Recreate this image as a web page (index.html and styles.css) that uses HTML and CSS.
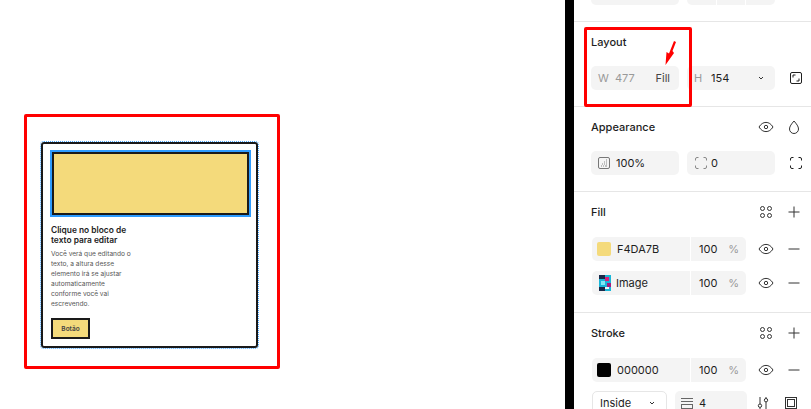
FILE: index.html
```html
<!DOCTYPE html>
<html lang="en">
<head>
  <meta charset="UTF-8" />
  <title>Layout Fill</title>
  <link rel="stylesheet" href="styles.css">
</head>
<body>
  <svg class="sprite" width="0" height="0">
    <symbol id="eye" viewBox="0 0 16 16"><path d="M1 8c2-3.2 4.400-4.600 7-4.600s5 1.400 7 4.600c-2 3.200-4.400 4.600-7 4.600S3 11.200 1 8z" fill="none" stroke="currentColor" stroke-width="1"/><circle cx="8" cy="8" r="1.700" fill="none" stroke="currentColor" stroke-width="1"/></symbol>
    <symbol id="styles" viewBox="0 0 16 16"><g fill="none" stroke="currentColor" stroke-width="1"><circle cx="4.500" cy="4.500" r="2"/><circle cx="11.500" cy="4.500" r="2"/><circle cx="4.500" cy="11.500" r="2"/><circle cx="11.500" cy="11.500" r="2"/></g></symbol>
    <symbol id="plus" viewBox="0 0 16 16"><path d="M8 2.500v11M2.500 8h11" stroke="currentColor" stroke-width="1"/></symbol>
    <symbol id="minus" viewBox="0 0 16 16"><path d="M2.500 8h11" stroke="currentColor" stroke-width="1"/></symbol>
    <symbol id="corners" viewBox="0 0 14 14"><path d="M1.500 4.500V3a1.500 1.500 0 0 1 1.500-1.500h1.500M9.500 1.500H11A1.500 1.500 0 0 1 12.500 3v1.500M12.500 9.500V11a1.500 1.500 0 0 1-1.500 1.500H9.500M4.500 12.500H3A1.500 1.500 0 0 1 1.500 11V9.500" fill="none" stroke="currentColor" stroke-width="1"/></symbol>
  </svg>

  <div class="main-wrapper">
    <main class="canvas">
      <div class="red-box">
        <div class="card">
          <div class="card-image"></div>
          <h2 class="card-title">Clique no bloco de<br>texto para editar</h2>
          <p class="card-text">Você verá que editando o<br>texto, a altura desse<br>elemento irá se ajustar<br>automaticamente<br>conforme você vai<br>escrevendo.</p>
          <div class="card-btn">Botão</div>
        </div>
      </div>
    </main>

    <div class="divider-bar"></div>

    <aside class="panel">
      <section class="section section-top">
        <div class="row">
          <div class="field field-half"></div>
          <div class="field field-half field-split"><span></span><span></span><span></span></div>
        </div>
      </section>

      <section class="section">
        <div class="section-head"><span class="section-title">Layout</span></div>
        <div class="row">
          <div class="field field-half">
            <span class="label">W</span><span class="muted">477</span>
            <span class="fill-tag">Fill</span>
          </div>
          <div class="field field-half">
            <span class="label">H</span><span class="value">154</span>
            <svg class="chevron" width="8" height="8" viewBox="0 0 8 8"><path d="M2 3l2 2 2-2" fill="none" stroke="currentColor" stroke-width="1"/></svg>
          </div>
          <svg class="layout-icon" width="14" height="14" viewBox="0 0 14 14"><rect x="1.500" y="1.500" width="11" height="11" rx="1.500" fill="none" stroke="#1e1e1e"/><path d="M4 6.500V4h2.500M10 7.500V10H7.500" fill="none" stroke="#1e1e1e"/></svg>
        </div>
        <div class="red-highlight"></div>
        <svg class="red-arrow" width="13" height="25" viewBox="0 0 13 25"><path d="M10 0L12 1L8.500 10L10 12L1.500 24L2.500 11L5 12.500z" fill="#f00"/></svg>
      </section>

      <section class="section">
        <div class="section-head">
          <span class="section-title">Appearance</span>
          <div class="head-icons">
            <svg class="icon"><use href="#eye"/></svg>
            <svg class="icon" viewBox="0 0 16 16"><path d="M8 2c2.500 3 4.500 5.300 4.500 8a4.500 4.500 0 0 1-9 0C3.500 7.300 5.500 5 8 2z" fill="none" stroke="currentColor"/></svg>
          </div>
        </div>
        <div class="row">
          <div class="field field-half">
            <svg class="field-icon" width="12" height="12" viewBox="0 0 12 12"><rect x=".5" y=".5" width="11" height="11" rx="1.500" fill="none" stroke="#777"/><path d="M8 3h1M6 5h1M8 5h1M4 7h1M6 7h1M8 7h1M3 9h1M5 9h1M7 9h2" stroke="#888"/></svg>
            <span class="value">100%</span>
          </div>
          <div class="field field-half">
            <svg class="field-icon corners-light" width="14" height="14"><use href="#corners"/></svg>
            <span class="value">0</span>
          </div>
          <svg class="layout-icon" width="14" height="14"><use href="#corners"/></svg>
        </div>
      </section>

      <section class="section section-list">
        <div class="section-head">
          <span class="section-title">Fill</span>
          <div class="head-icons">
            <svg class="icon"><use href="#styles"/></svg>
            <svg class="icon"><use href="#plus"/></svg>
          </div>
        </div>
        <div class="row-list">
          <div class="row">
            <div class="field field-paint">
              <div class="paint-name"><span class="swatch swatch-yellow"></span><span class="value">F4DA7B</span></div>
              <div class="paint-opacity"><span class="value">100</span><span class="muted">%</span></div>
            </div>
            <svg class="icon"><use href="#eye"/></svg>
            <svg class="icon"><use href="#minus"/></svg>
          </div>
          <div class="row">
            <div class="field field-paint">
              <div class="paint-name paint-image">
                <svg class="image-thumb" width="12" height="16" viewBox="0 0 6 8" shape-rendering="crispEdges">
                  <rect width="6" height="8" fill="#19b6d8"/>
                  <rect x="0" y="0" width="3" height="2" fill="#1b2a4a"/>
                  <rect x="3" y="1" width="2" height="2" fill="#d81f7c"/>
                  <rect x="1" y="3" width="2" height="2" fill="#7fe7f5"/>
                  <rect x="4" y="4" width="2" height="2" fill="#a01f80"/>
                  <rect x="0" y="6" width="3" height="2" fill="#1b2a4a"/>
                  <rect x="3" y="6" width="2" height="1" fill="#e8f8fb"/>
                </svg>
                <span class="value">Image</span>
              </div>
              <div class="paint-opacity"><span class="value">100</span><span class="muted">%</span></div>
            </div>
            <svg class="icon"><use href="#eye"/></svg>
            <svg class="icon"><use href="#minus"/></svg>
          </div>
        </div>
      </section>

      <section class="section section-list">
        <div class="section-head">
          <span class="section-title">Stroke</span>
          <div class="head-icons">
            <svg class="icon"><use href="#styles"/></svg>
            <svg class="icon"><use href="#plus"/></svg>
          </div>
        </div>
        <div class="row-list row-list-tight">
          <div class="row">
            <div class="field field-paint">
              <div class="paint-name"><span class="swatch swatch-black"></span><span class="value">000000</span></div>
              <div class="paint-opacity"><span class="value">100</span><span class="muted">%</span></div>
            </div>
            <svg class="icon"><use href="#eye"/></svg>
            <svg class="icon"><use href="#minus"/></svg>
          </div>
          <div class="row">
            <div class="select-inside">
              <span class="value">Inside</span>
              <svg class="chevron" width="8" height="8" viewBox="0 0 8 8"><path d="M2 3l2 2 2-2" fill="none" stroke="currentColor" stroke-width="1"/></svg>
            </div>
            <div class="field field-weight">
              <svg class="field-icon" width="12" height="12" viewBox="0 0 12 12"><path d="M0 1.500h12M0 4.500h12" stroke="#666"/><rect x=".5" y="7.500" width="11" height="4" fill="none" stroke="#666"/></svg>
              <span class="value">4</span>
            </div>
            <svg class="icon" viewBox="0 0 16 16"><path d="M5 2v7M5 12.500V14M11 2v1.500M11 7v7" stroke="currentColor"/><circle cx="5" cy="10.700" r="1.700" fill="none" stroke="currentColor"/><circle cx="11" cy="5.200" r="1.700" fill="none" stroke="currentColor"/></svg>
            <svg class="icon" viewBox="0 0 16 16"><rect x="2.500" y="2.500" width="11" height="11" fill="none" stroke="currentColor"/><rect x="4.500" y="4.500" width="7" height="7" fill="none" stroke="currentColor"/></svg>
          </div>
        </div>
      </section>
    </aside>
  </div>
</body>
</html>
```

FILE: styles.css
```css
body, html {
  height: 100%;
  margin: 0;
  padding: 0;
  overflow: hidden;
  background: #fff;
}
body {
  font-family: "Inter", "Liberation Sans", sans-serif;
  color: #1e1e1e;
}
.sprite {
  position: absolute;
}
.main-wrapper {
  display: flex;
  height: 409px;
  overflow: hidden;
}

/* canvas side */
.canvas {
  width: 565px;
  flex: none;
  padding: 114px 0 0 24px;
  box-sizing: border-box;
}
.red-box {
  width: 256px;
  height: 255px;
  box-sizing: border-box;
  border: 3px solid #f00;
  border-radius: 2px;
  padding: 25px 0 0 14px;
}
.card {
  width: 217px;
  height: 206px;
  box-sizing: border-box;
  border: 2px solid #1a1a1a;
  border-radius: 3px;
  outline: 1px dotted #4aa8ff;
  padding: 8px 8px 0 8px;
}
.card-image {
  height: 63px;
  width: 197px;
  box-sizing: border-box;
  background: #f4da7b;
  border: 2px solid #1a1a1a;
  box-shadow: 0 0 0 2px #2d9cff;
  margin: 0 0 0 1px;
}
.card-title {
  margin: 10px 0 0 0;
  font-size: 8.4px;
  line-height: 10px;
  font-weight: 600;
  color: #222;
}
.card-text {
  margin: 4px 0 0 0;
  font-size: 6.6px;
  line-height: 10px;
  color: #555;
}
.card-btn {
  margin: 9px 0 0 0;
  width: 39px;
  height: 21px;
  box-sizing: border-box;
  background: #f4da7b;
  border: 2px solid #1a1a1a;
  display: flex;
  align-items: center;
  justify-content: center;
  font-size: 6.5px;
  font-weight: 600;
  color: #444;
}

.divider-bar {
  width: 9px;
  flex: none;
  background: #000;
}

/* right panel */
.panel {
  width: 237px;
  flex: none;
  font-size: 11px;
}
.section {
  position: relative;
  padding: 10px 0 16px 17px;
  border-bottom: 1px solid #e6e6e6;
}
.section-list {
  padding-bottom: 17px;
}
.section-top {
  height: 22px;
  box-sizing: border-box;
  padding-top: 0;
  display: flex;
  flex-direction: column;
  justify-content: flex-end;
}
.section-head {
  display: flex;
  align-items: center;
  justify-content: space-between;
  height: 20px;
  margin-bottom: 14px;
  padding-right: 9px;
}
.section-title {
  font-size: 11px;
  font-weight: 500;
  color: #1e1e1e;
}
.head-icons {
  display: flex;
  gap: 12px;
}
.row {
  display: flex;
  align-items: center;
  height: 24px;
  gap: 12px;
}
.row-list {
  display: flex;
  flex-direction: column;
  gap: 10px;
  margin-top: 15px;
}
.row-list-tight {
  gap: 9px;
}
.field {
  height: 24px;
  flex: none;
  box-sizing: border-box;
  background: #f4f4f4;
  border-radius: 5px;
  display: flex;
  align-items: center;
  position: relative;
}
.field-half {
  width: 88px;
  padding-left: 7px;
}
.field-half + .field-half {
  margin-left: -4px;
}
.field-half + .layout-icon {
  margin-left: 2px;
}
.field-split {
  padding: 0;
}
.field-split span {
  flex: 1;
  height: 100%;
  border-left: 1px solid #fff;
}
.field-split span:first-child {
  border-left: none;
}
.label {
  color: #999;
  width: 17px;
}
.muted {
  color: #999;
}
.value {
  color: #1e1e1e;
}
.fill-tag {
  margin-left: auto;
  margin-right: 9px;
  color: #444;
}
.chevron {
  margin-left: auto;
  margin-right: 10px;
  color: #333;
}
.layout-icon {
  color: #1e1e1e;
  flex: none;
}
.field-icon {
  margin-right: 6px;
  flex: none;
}
.corners-light {
  color: #888;
  margin-right: 3px;
}
.icon {
  width: 16px;
  height: 16px;
  flex: none;
  color: #333;
}
.field-paint {
  width: 154px;
  margin-left: 1px;
  overflow: hidden;
}
.paint-name {
  width: 99px;
  height: 100%;
  display: flex;
  align-items: center;
  gap: 6px;
  padding-left: 5px;
  box-sizing: border-box;
  border-right: 1px solid #fff;
}
.paint-image {
  padding-left: 7px;
  gap: 5px;
}
.paint-opacity {
  flex: 1;
  display: flex;
  justify-content: space-between;
  padding: 0 7px 0 8px;
}
.swatch {
  width: 14px;
  height: 14px;
  border-radius: 2px;
  flex: none;
}
.swatch-yellow {
  background: #f4da7b;
}
.swatch-black {
  background: #000;
}
.select-inside {
  width: 75px;
  height: 24px;
  margin-left: 1px;
  box-sizing: border-box;
  border: 1px solid #e6e6e6;
  border-radius: 5px;
  padding-left: 7px;
  display: flex;
  align-items: center;
  flex: none;
}
.field-weight {
  width: 72px;
  margin-left: -4px;
  padding-left: 6px;
}
.field-weight + .icon {
  margin-left: -4px;
}

/* annotations over the Layout section */
.red-highlight {
  position: absolute;
  left: 10px;
  top: 5px;
  width: 108px;
  height: 80px;
  box-sizing: border-box;
  border: 3px solid #f00;
  border-radius: 2px;
  pointer-events: none;
}
.red-arrow {
  position: absolute;
  left: 90px;
  top: 19px;
}
```
